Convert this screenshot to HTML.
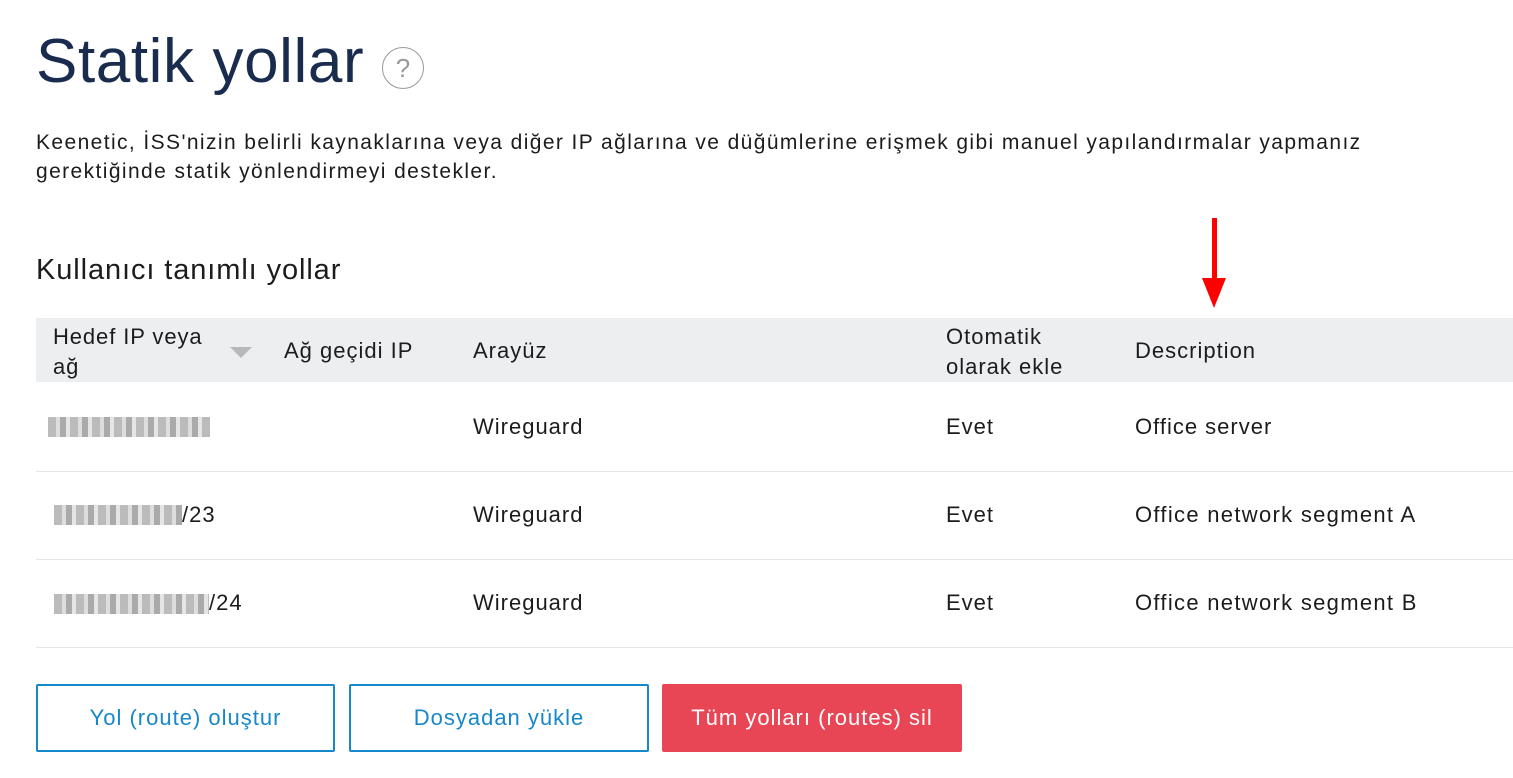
<!DOCTYPE html>
<html><head><meta charset="utf-8"><style>
body{margin:0;width:1513px;height:778px;background:#fff;font-family:"Liberation Sans",sans-serif;color:#1c1c1c;position:relative;overflow:hidden}
.a{position:absolute;white-space:nowrap}
h1{position:absolute;left:36px;top:26px;margin:0;font-weight:400;font-size:62px;color:#1a2c4e;letter-spacing:0.6px}
.q{position:absolute;left:382px;top:47px;width:42px;height:42px;border:1.5px solid #999;border-radius:50%;box-sizing:border-box;color:#999;font-size:26px;text-align:center;line-height:40px}
p{position:absolute;left:36px;top:128px;margin:0;font-size:21px;line-height:29px;width:1385px;letter-spacing:1.4px}
.hdr{position:absolute;left:36px;top:318px;width:1477px;height:64px;background:#edeef0}
.t{font-size:22px;letter-spacing:1px}
.line{position:absolute;left:36px;width:1477px;height:1px;background:#e6e6e6}
.blur{position:absolute;height:20px;background:repeating-linear-gradient(90deg,#bbb 0 8px,#ddd 8px 12px,#aaa 12px 18px,#e5e5e5 18px 22px)}
.btn{position:absolute;top:684px;height:68px;box-sizing:border-box;font-size:22px;letter-spacing:1px;display:flex;align-items:center;justify-content:center;border-radius:2px}
.o{border:2px solid #1687c9;color:#1687c9}
</style></head><body>
<h1>Statik yollar</h1>
<div class="q">?</div>
<p>Keenetic, İSS'nizin belirli kaynaklarına veya diğer IP ağlarına ve düğümlerine erişmek gibi manuel yapılandırmalar yapmanız<br>gerektiğinde statik yönlendirmeyi destekler.</p>
<div class="a" style="left:36px;top:254px;font-size:29px;letter-spacing:0.9px">Kullanıcı tanımlı yollar</div>
<svg class="a" style="left:1200px;top:218px" width="28" height="92"><rect x="12" y="0" width="5" height="62" fill="#f00"/><polygon points="2,60 26,60 14,90" fill="#f00"/></svg>
<div class="hdr"></div>
<div class="a t" style="left:53px;top:322px;line-height:30px;letter-spacing:0.9px">Hedef IP veya<br>ağ</div>
<svg class="a" style="left:230px;top:347px" width="22" height="12"><polygon points="0,0 22,0 11,11" fill="#b8b8b8"/></svg>
<div class="a t" style="left:284px;top:338px">Ağ geçidi IP</div>
<div class="a t" style="left:473px;top:338px">Arayüz</div>
<div class="a t" style="left:946px;top:322px;line-height:30px">Otomatik<br>olarak ekle</div>
<div class="a t" style="left:1135px;top:338px">Description</div>

<div class="blur" style="left:48px;top:417px;width:162px"></div>
<div class="a t" style="left:473px;top:414px">Wireguard</div><div class="a t" style="left:946px;top:414px">Evet</div><div class="a t" style="left:1135px;top:414px">Office server</div>
<div class="line" style="top:471px"></div>
<div class="blur" style="left:54px;top:505px;width:128px"></div><div class="a t" style="left:182px;top:502px">/23</div>
<div class="a t" style="left:473px;top:502px">Wireguard</div><div class="a t" style="left:946px;top:502px">Evet</div><div class="a t" style="left:1135px;top:502px;letter-spacing:1.3px">Office network segment A</div>
<div class="line" style="top:559px"></div>
<div class="blur" style="left:54px;top:594px;width:155px"></div><div class="a t" style="left:209px;top:590px">/24</div>
<div class="a t" style="left:473px;top:590px">Wireguard</div><div class="a t" style="left:946px;top:590px">Evet</div><div class="a t" style="left:1135px;top:590px;letter-spacing:1.3px">Office network segment B</div>
<div class="line" style="top:647px"></div>

<div class="btn o" style="left:36px;width:299px">Yol (route) oluştur</div>
<div class="btn o" style="left:349px;width:300px">Dosyadan yükle</div>
<div class="btn" style="left:662px;width:300px;background:#e84555;color:#fff">Tüm yolları (routes) sil</div>
</body></html>
